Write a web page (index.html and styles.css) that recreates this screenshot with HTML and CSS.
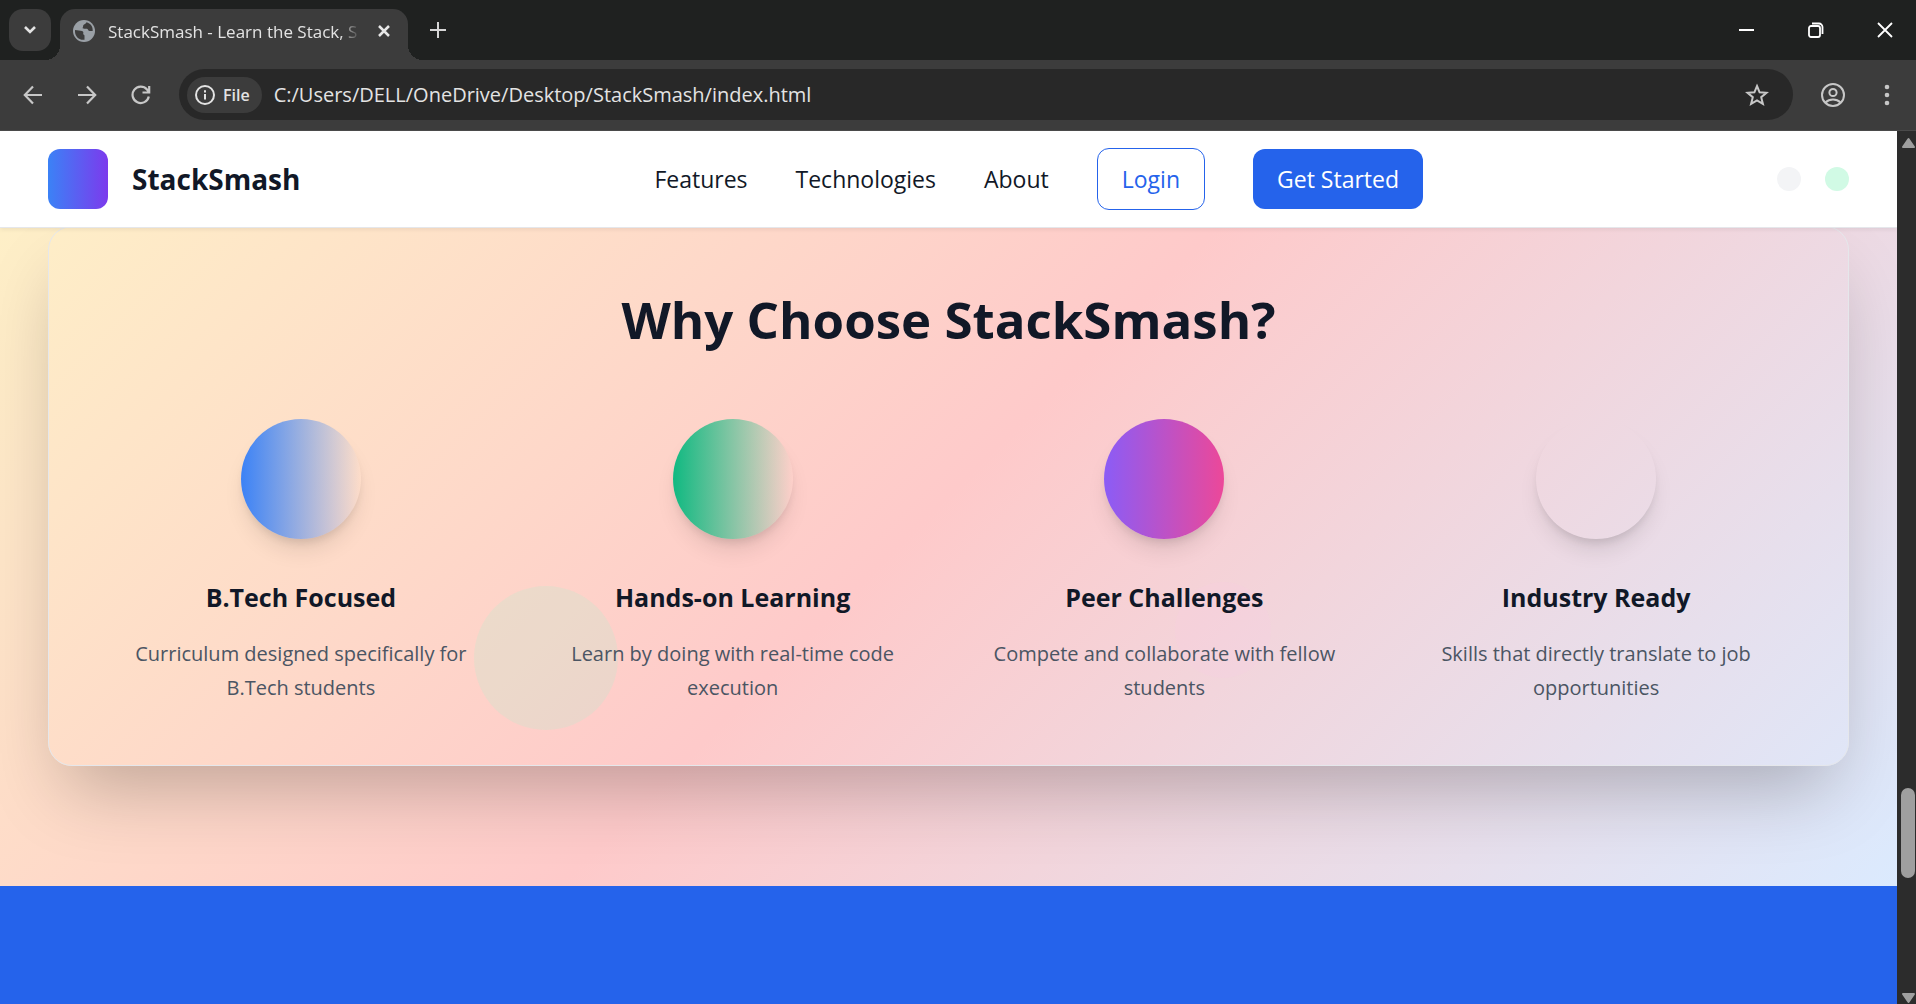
FILE: index.html
```html
<!DOCTYPE html>
<html lang="en">
<head>
<meta charset="utf-8">
<title>StackSmash - Learn the Stack, Smash the Code</title>
<link rel="stylesheet" href="styles.css">
</head>
<body>
<div class="tabstrip">
  <button class="tab-search" aria-label="Search tabs"><svg width="14" height="14" viewBox="0 0 14 14"><path d="M2 4l5 5 5-5" fill="none" stroke="#e3e3e3" stroke-width="2.6"/></svg></button>
  <div class="tab">
    <svg class="globe" width="22" height="22" viewBox="0 0 22 22"><circle cx="11" cy="11" r="11" fill="#9aa0a6"/><path d="M2 10c3 0 5 1 7 1 1.500 .4 1.500 1.600 1.200 2.800-.2 1 1.300 .8 1.300 2v4C5.500 20.500 1.500 16 2 10zM13.500 2.300c-.5 1.700-2.500 2-3.200 3-.5 1.200 .2 2.200-1 2.700 1.200 1 3.200.5 4.700.7 1.200.2 1.200 2.300 2.500 2.300h3.200C20 6.500 17.500 3.300 13.500 2.300z" fill="#3c3c3c"/></svg>
    <span class="tab-title">StackSmash - Learn the Stack, S</span>
    <button class="plain" aria-label="Close tab"><svg width="14" height="14" viewBox="0 0 14 14"><path d="M2 2l10 10M12 2L2 12" stroke="#e8e8e8" stroke-width="2.500"/></svg></button>
  </div>
  <button class="plain new-tab" aria-label="New tab"><svg width="16" height="16" viewBox="0 0 16 16"><path d="M8 0v16M0 8h16" stroke="#d6d6d6" stroke-width="2"/></svg></button>
  <div class="window-controls">
    <button class="plain" aria-label="Minimize"><svg width="16" height="16" viewBox="0 0 16 16"><path d="M0 8h15" stroke="#fff" stroke-width="2"/></svg></button>
    <button class="plain" aria-label="Restore"><svg width="16" height="16" viewBox="0 0 16 16" fill="none" stroke="#fff" stroke-width="1.800"><rect x="1" y="4" width="11" height="11" rx="2"/><path d="M4 1.500h7a3.500 3.500 0 0 1 3.500 3.500v7"/></svg></button>
    <button class="plain" aria-label="Close"><svg width="16" height="16" viewBox="0 0 16 16"><path d="M1 1l14 14M15 1L1 15" stroke="#fff" stroke-width="1.800"/></svg></button>
  </div>
</div>
<div class="toolbar">
  <div class="nav-buttons">
    <button class="plain" aria-label="Back"><svg width="20" height="20" viewBox="0 0 20 20" fill="none" stroke="#c7c7c7" stroke-width="2.200"><path d="M19 10H2M10 1.500L1.800 10l8.200 8.500"/></svg></button>
    <button class="plain" aria-label="Forward"><svg width="20" height="20" viewBox="0 0 20 20" fill="none" stroke="#c7c7c7" stroke-width="2.200"><path d="M1 10h17M10 1.500l8.200 8.500-8.200 8.500"/></svg></button>
    <button class="plain" aria-label="Reload"><svg width="20" height="20" viewBox="0 0 20 20" fill="none" stroke="#c7c7c7" stroke-width="2.200"><path d="M17.800 11.500A8.200 8.200 0 1 1 16 4.500L18 7M18.200 1v6.500H11.500"/></svg></button>
  </div>
  <div class="omnibox">
    <button class="chip"><svg width="20" height="20" viewBox="0 0 20 20"><circle cx="10" cy="10" r="9" fill="none" stroke="#e3e3e3" stroke-width="2"/><path d="M10 9v5.500M10 5.200v2.200" stroke="#e3e3e3" stroke-width="2"/></svg>File</button>
    <input class="url" type="text" aria-label="Address" value="C:/Users/DELL/OneDrive/Desktop/StackSmash/index.html">
    <button class="plain" aria-label="Bookmark"><svg width="24" height="24" viewBox="0 0 24 24"><path d="M12 3l2.600 6.300 6.900.5-5.300 4.400 1.700 6.700L12 17.300l-5.900 3.600 1.700-6.700L2.500 9.800l6.900-.5z" fill="none" stroke="#c7c7c7" stroke-width="2"/></svg></button>
  </div>
  <div class="menu-buttons">
    <button class="plain" aria-label="Profile"><svg width="24" height="24" viewBox="0 0 24 24" fill="none" stroke="#c7c7c7" stroke-width="2"><circle cx="12" cy="12" r="11"/><circle cx="12" cy="9.500" r="3.600"/><path d="M4.500 19.500c2-2 4.500-3 7.500-3s5.500 1 7.500 3"/></svg></button>
    <button class="plain" aria-label="Menu"><svg width="6" height="24" viewBox="0 0 6 24" fill="#c7c7c7"><circle cx="3" cy="4" r="2.300"/><circle cx="3" cy="12" r="2.300"/><circle cx="3" cy="20" r="2.300"/></svg></button>
  </div>
</div>
<div class="viewport">
  <div class="page">
    <header class="site-header">
      <div class="brand"><span class="logo"></span>StackSmash</div>
      <nav class="nav">
        <a href="#features">Features</a>
        <a href="#technologies">Technologies</a>
        <a href="#about">About</a>
        <button class="btn btn-outline">Login</button>
        <button class="btn btn-solid">Get Started</button>
      </nav>
      <div class="dots"><span class="dot"></span><span class="dot dot-green"></span></div>
    </header>
    <section class="why">
      <span class="bubble bubble-green"></span>
      <span class="bubble bubble-pink"></span>
      <div class="card">
        <h2>Why Choose StackSmash?</h2>
        <div class="grid">
          <article><span class="orb orb-blue"></span><h3>B.Tech Focused</h3><p>Curriculum designed specifically for B.Tech students</p></article>
          <article><span class="orb orb-green"></span><h3>Hands-on Learning</h3><p>Learn by doing with real-time code execution</p></article>
          <article><span class="orb orb-purple"></span><h3>Peer Challenges</h3><p>Compete and collaborate with fellow students</p></article>
          <article><span class="orb"></span><h3>Industry Ready</h3><p>Skills that directly translate to job opportunities</p></article>
        </div>
      </div>
    </section>
    <section class="cta"></section>
  </div>
  <div class="scrollbar">
    <svg width="15" height="12" viewBox="0 0 15 12"><path d="M7.500 2L13 10H2z" fill="#9f9f9f" stroke="#9f9f9f" stroke-width="2" stroke-linejoin="round"/></svg>
    <span class="thumb"></span>
    <svg width="15" height="12" viewBox="0 0 15 12"><path d="M7.500 10L13 2H2z" fill="#9f9f9f" stroke="#9f9f9f" stroke-width="2" stroke-linejoin="round"/></svg>
  </div>
</div>
</body>
</html>
```
FILE: styles.css
```css
* { box-sizing: border-box; }
body {
  margin: 0;
  height: 100vh;
  display: flex;
  flex-direction: column;
  overflow: hidden;
  background: #3c3c3c;
  font-family: "Open Sans", "Noto Sans", sans-serif;
  color: #111827;
}
button, input { font: inherit; color: inherit; }
h2, h3, p { margin: 0; }
svg { display: block; }
.plain { border: 0; padding: 0; background: none; }

.tabstrip {
  flex: none;
  display: flex;
  align-items: center;
  height: 60px;
  padding: 0 23px 0 9px;
  background: #1f2120;
}
.tab-search {
  display: grid;
  place-items: center;
  width: 42px;
  height: 42px;
  border: 0;
  padding: 0;
  border-radius: 14px;
  background: #3c3c3c;
}
.tab {
  position: relative;
  display: flex;
  align-items: center;
  align-self: flex-end;
  width: 348px;
  height: 51px;
  margin-left: 9px;
  padding: 0 17px 8px 13px;
  border-radius: 15px 15px 0 0;
  background: #3c3c3c;
}
.tab::before, .tab::after {
  content: "";
  position: absolute;
  bottom: 0;
  width: 15px;
  height: 15px;
}
.tab::before { right: 100%; background: radial-gradient(circle at 0 0, transparent 15px, #3c3c3c 15px); }
.tab::after { left: 100%; background: radial-gradient(circle at 100% 0, transparent 15px, #3c3c3c 15px); }
.tab-title {
  flex: 1;
  margin: 2px 12px 0 13px;
  white-space: nowrap;
  font-size: 17px;
  color: #e3e3e3;
  -webkit-mask-image: linear-gradient(to right, #000 232px, transparent 252px);
  mask-image: linear-gradient(to right, #000 232px, transparent 252px);
}
.new-tab { margin-left: 22px; }
.window-controls { display: flex; gap: 53px; margin-left: auto; }

.toolbar {
  flex: none;
  display: flex;
  align-items: center;
  height: 71px;
  padding: 0 26px 1px 23px;
  border-bottom: 1px solid #4a4a4a;
  gap: 28px;
  background: #3c3c3c;
}
.nav-buttons { display: flex; gap: 34px; }
.menu-buttons { display: flex; gap: 39px; }
.omnibox {
  flex: 1;
  display: flex;
  align-items: center;
  height: 51px;
  padding: 0 24px 0 8px;
  border-radius: 26px;
  background: #282828;
}
.chip {
  display: flex;
  align-items: center;
  gap: 8px;
  height: 36px;
  border: 0;
  padding: 0 12px 0 8px;
  border-radius: 18px;
  background: #3c3c3c;
  color: #e3e3e3;
  font-size: 16px;
  font-weight: 600;
}
.url {
  flex: 1;
  border: 0;
  padding: 0;
  margin-left: 12px;
  background: none;
  color: #e3e3e3;
  font-size: 20px;
}

.viewport { flex: 1; display: flex; min-height: 0; }
.page { flex: 1; display: flex; flex-direction: column; min-width: 0; overflow: hidden; }
.site-header {
  position: relative;
  z-index: 2;
  flex: none;
  display: flex;
  align-items: center;
  justify-content: space-between;
  height: 97px;
  padding: 0 48px;
  border-bottom: 1px solid #e5e7eb;
  background: #fff;
  box-shadow: 0 2px 4px rgba(0, 0, 0, .06);
}
.brand { display: flex; align-items: center; gap: 24px; font-size: 28px; font-weight: 700; }
.logo { width: 60px; height: 60px; border-radius: 12px; background: linear-gradient(90deg, #3b82f6, #7c3aed); }
.nav { display: flex; align-items: center; gap: 48px; font-size: 23px; }
.nav a { color: inherit; text-decoration: none; }
.btn { height: 60px; padding: 0 24px; border: 0; border-radius: 12px; }
.btn-outline { height: 62px; border: 1px solid #2563eb; background: #fff; color: #2563eb; }
.btn-solid { background: #2563eb; color: #fff; }
.dots { display: flex; gap: 24px; }
.dot { width: 24px; height: 24px; border-radius: 50%; background: #f3f4f6; }
.dot-green { background: #d1fae5; }

/* The section is scrolled partly beneath the sticky header. */
.why {
  position: relative;
  flex: none;
  margin-top: -122px;
  padding: 120px 48px;
  background: linear-gradient(135deg, #fef3c7, #fecaca, #dbeafe);
}
.card {
  position: relative;
  padding: 60px 72px;
  border: 1px solid #e5e7eb;
  border-radius: 24px;
  box-shadow: 0 38px 75px -18px rgba(0, 0, 0, .25);
}
h2 { text-align: center; font-size: 51px; line-height: 64px; margin-bottom: 68px; }
.grid { display: grid; grid-template-columns: repeat(4, 1fr); gap: 72px; text-align: center; }
article { display: flex; flex-direction: column; align-items: center; }
.orb { width: 120px; height: 120px; border-radius: 50%; box-shadow: 0 15px 22px -4px rgba(0, 0, 0, .1), 0 6px 9px -3px rgba(0, 0, 0, .1); }
.orb-blue { background: linear-gradient(90deg, #3b82f6, rgba(59, 130, 246, 0)); }
.orb-green { background: linear-gradient(90deg, #10b981, rgba(16, 185, 129, 0)); }
.orb-purple { background: linear-gradient(90deg, #8b5cf6, #ec4899); }
h3 { margin: 36px 0 18px; font-size: 25px; line-height: 44px; }
p { font-size: 20px; line-height: 34px; color: #4b5563; }
.bubble { position: absolute; border-radius: 50%; opacity: .2; }
.bubble-green { left: 25%; bottom: 156px; width: 144px; height: 144px; background: #a7f3d0; }
.bubble-pink { right: 33%; bottom: 208px; width: 96px; height: 96px; background: #fbcfe8; }
.cta { flex: 1; background: #2563eb; }

.scrollbar {
  flex: none;
  display: flex;
  flex-direction: column;
  align-items: center;
  width: 19px;
  padding: 6px 0 0 3px;
  background: #2c2c2c;
}
.thumb { width: 14px; height: 90px; margin: auto 0 114px; border-radius: 7px; background: #9f9f9f; }
```
